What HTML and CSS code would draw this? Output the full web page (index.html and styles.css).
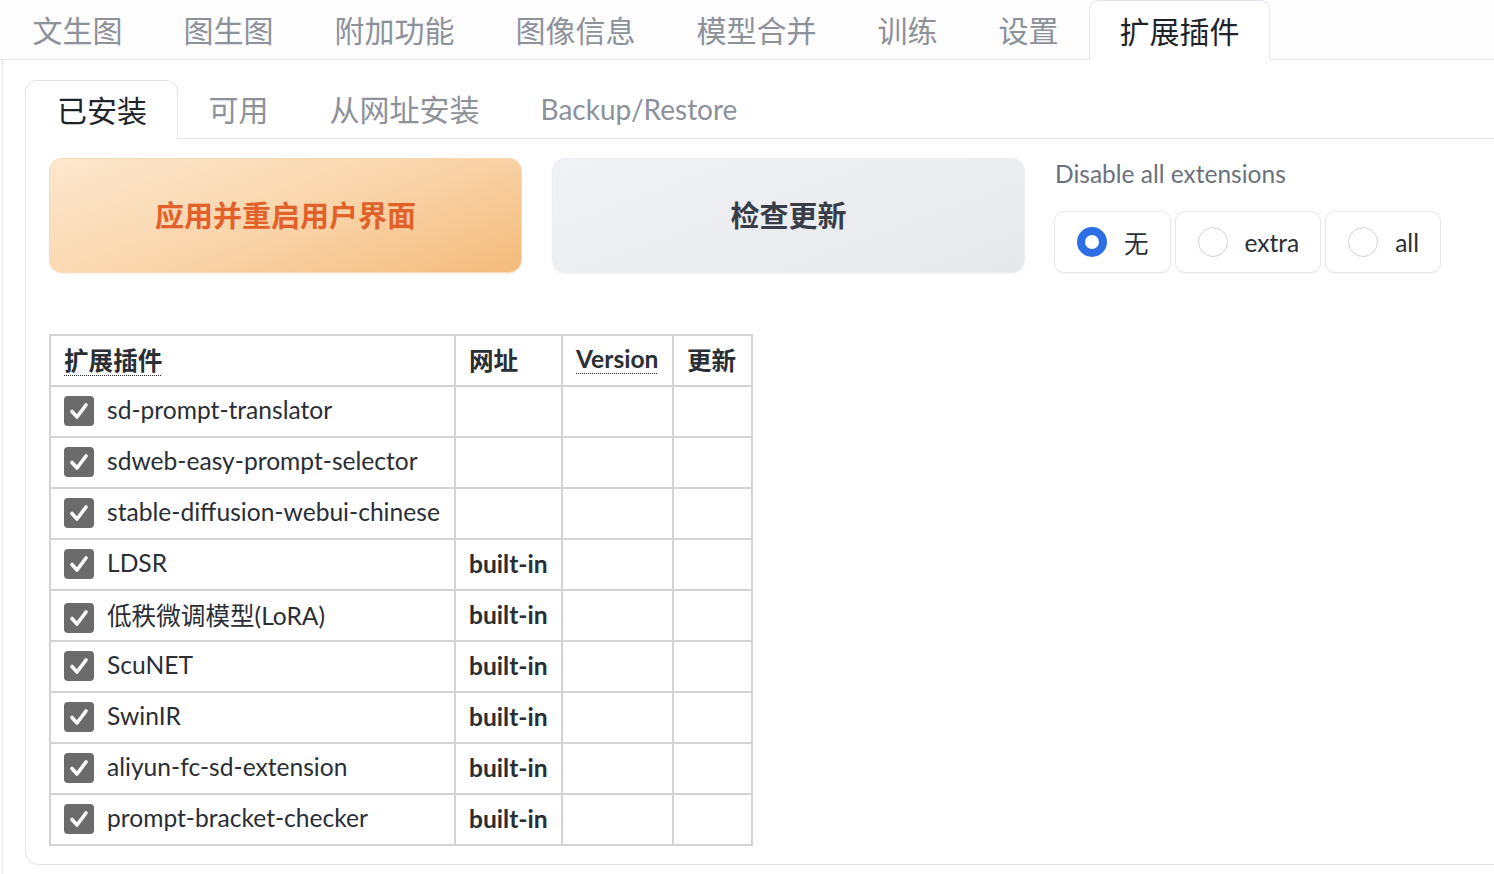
FILE: index.html
```html
<!DOCTYPE html>
<html lang="zh-CN">
<head>
<meta charset="utf-8">
<title>扩展插件</title>
<link rel="stylesheet" href="styles.css">
</head>
<body>
<div class="topbar">
  <div class="tab">文生图</div>
  <div class="tab">图生图</div>
  <div class="tab">附加功能</div>
  <div class="tab">图像信息</div>
  <div class="tab">模型合并</div>
  <div class="tab">训练</div>
  <div class="tab">设置</div>
  <div class="tab active">扩展插件</div>
</div>
<div class="outer">
  <div class="subbar">
    <div class="subtab active">已安装</div>
    <div class="subtab">可用</div>
    <div class="subtab">从网址安装</div>
    <div class="subtab latin">Backup/Restore</div>
  </div>
  <div class="inner">
    <div class="actions">
      <button class="btn primary">应用并重启用户界面</button>
      <button class="btn secondary">检查更新</button>
      <div class="radio-block">
        <div class="radio-label">Disable all extensions</div>
        <div class="radios">
          <label class="radio"><span class="dot on"></span><span>无</span></label>
          <label class="radio"><span class="dot"></span><span>extra</span></label>
          <label class="radio"><span class="dot"></span><span>all</span></label>
        </div>
      </div>
    </div>
    <table class="ext">
      <thead>
        <tr>
          <th class="c1"><abbr>扩展插件</abbr></th>
          <th class="c2">网址</th>
          <th class="c3"><abbr>Version</abbr></th>
          <th class="c4">更新</th>
        </tr>
      </thead>
      <tbody>
        <tr><td><span class="cb"></span>sd-prompt-translator</td><td></td><td></td><td></td></tr>
        <tr><td><span class="cb"></span>sdweb-easy-prompt-selector</td><td></td><td></td><td></td></tr>
        <tr><td><span class="cb"></span>stable-diffusion-webui-chinese</td><td></td><td></td><td></td></tr>
        <tr><td><span class="cb"></span>LDSR</td><td class="b">built-in</td><td></td><td></td></tr>
        <tr><td><span class="cb"></span>低秩微调模型(LoRA)</td><td class="b">built-in</td><td></td><td></td></tr>
        <tr><td><span class="cb"></span>ScuNET</td><td class="b">built-in</td><td></td><td></td></tr>
        <tr><td><span class="cb"></span>SwinIR</td><td class="b">built-in</td><td></td><td></td></tr>
        <tr><td><span class="cb"></span>aliyun-fc-sd-extension</td><td class="b">built-in</td><td></td><td></td></tr>
        <tr><td><span class="cb"></span>prompt-bracket-checker</td><td class="b">built-in</td><td></td><td></td></tr>
      </tbody>
    </table>
  </div>
</div>
</body>
</html>
```

FILE: styles.css
```css
* { box-sizing: border-box; }
html, body { margin: 0; height: 100%; }
body {
  background: #fdfdfd;
  font-family: Lato, "Noto Sans CJK SC", sans-serif;
  color: #1f2329;
  overflow: hidden;
}
.topbar {
  display: flex;
  height: 60px;
  padding-left: 2px;
  border-bottom: 1px solid #e3e5ea;
}
.tab {
  padding: 0 30.5px;
  font-size: 30px;
  line-height: 60px;
  color: #8c919a;
  white-space: nowrap;
}
.tab.active {
  background: #fff;
  color: #20242a;
  border: 1px solid #e3e5ea;
  border-bottom-color: #fff;
  border-radius: 10px 10px 0 0;
  margin-bottom: -1px;
  padding: 0 29.5px;
  height: 60px;
}
.outer {
  margin-left: 2px;
  border-left: 1px solid #e3e5ea;
  padding: 20px 0 0 22px;
  background: #fff;
  height: calc(100% - 60px);
}
.subbar {
  display: flex;
  height: 59px;
  border-bottom: 1px solid #e3e5ea;
}
.subtab {
  padding: 0 30.5px;
  font-size: 30px;
  line-height: 58px;
  color: #8c919a;
  white-space: nowrap;
}
.subtab.latin { font-size: 28px; }
.subtab.active {
  color: #20242a;
  border: 1px solid #e3e5ea;
  border-bottom-color: #fff;
  border-radius: 12px 12px 0 0;
  margin-bottom: -1px;
  height: 59px;
  padding: 0 30px 0 31px;
  background: #fff;
}
.inner {
  border: 1px solid #e3e5ea;
  border-top: none;
  border-right: none;
  border-radius: 0 0 0 14px;
  padding: 19px 0 20px 23px;
  height: 726px;
}
.actions {
  display: flex;
  align-items: flex-start;
  gap: 30px;
}
.btn {
  width: 473px;
  height: 115px;
  border-radius: 13px;
  font-family: inherit;
  font-size: 29px;
  font-weight: 700;
  cursor: pointer;
  padding-bottom: 4px;
}
.btn.primary {
  background: linear-gradient(160deg, #fde8cf 0%, #f9d3a8 55%, #f4bb7b 100%);
  border: 1px solid #f9d9b2;
  color: #e2612a;
  box-shadow: 0 1px 2px rgba(0,0,0,0.05);
}
.btn.secondary {
  background: linear-gradient(160deg, #f1f2f5 0%, #e6e8ec 100%);
  border: 1px solid #eceef1;
  color: #383d47;
  box-shadow: 0 1px 2px rgba(0,0,0,0.05);
}
.radio-block {
  display: flex;
  flex-direction: column;
  padding-top: 1px;
}
.radio-label {
  font-size: 24.5px;
  color: #6b717c;
  line-height: 30px;
  margin-bottom: 22px;
}
.radios {
  display: flex;
  gap: 4px;
  margin-left: -1px;
}
.radio {
  display: flex;
  align-items: center;
  gap: 17px;
  height: 62px;
  padding: 0 21px 0 22px;
  border: 1px solid #e6e8ec;
  border-radius: 10px;
  background: #fff;
  box-shadow: 0 1px 2px rgba(0,0,0,0.05);
  font-size: 24.5px;
  color: #2a2e35;
}
.dot {
  width: 30px;
  height: 30px;
  border-radius: 50%;
  border: 1px solid #cfd3d9;
  background: #fff;
}
.dot.on {
  border: 8px solid #2d6ee6;
  background: #fff;
}
.ext {
  margin-top: 61px;
  border-collapse: collapse;
  font-size: 24.6px;
  color: #2a2e35;
}
.ext th, .ext td {
  border: 2px solid #d3d3d3;
  height: 51px;
  padding: 0 12px 0 13px;
  text-align: left;
  white-space: nowrap;
}
.ext th { font-weight: 700; padding-bottom: 4px; }
.ext td { padding-bottom: 2px; }
.c1 { width: 405px; }
.c2 { width: 107px; }
.c3 { width: 111px; }
.c4 { width: 79px; }
abbr {
  text-decoration: underline dotted;
  text-underline-offset: 5px;
  text-decoration-thickness: 1px;
}
.ext td.b { font-weight: 700; }
.cb {
  display: inline-block;
  width: 30px;
  height: 30px;
  border-radius: 4px;
  background: #6b6b6b center / 24px 24px no-repeat;
  background-image: url("data:image/svg+xml;utf8,<svg xmlns='http://www.w3.org/2000/svg' viewBox='0 0 24 24'><path d='M5 12.5 L10 18 L19 6' fill='none' stroke='white' stroke-width='3.6' stroke-linecap='round' stroke-linejoin='round'/></svg>");
  vertical-align: middle;
  margin: -2px 13px 0 0;
}
```
